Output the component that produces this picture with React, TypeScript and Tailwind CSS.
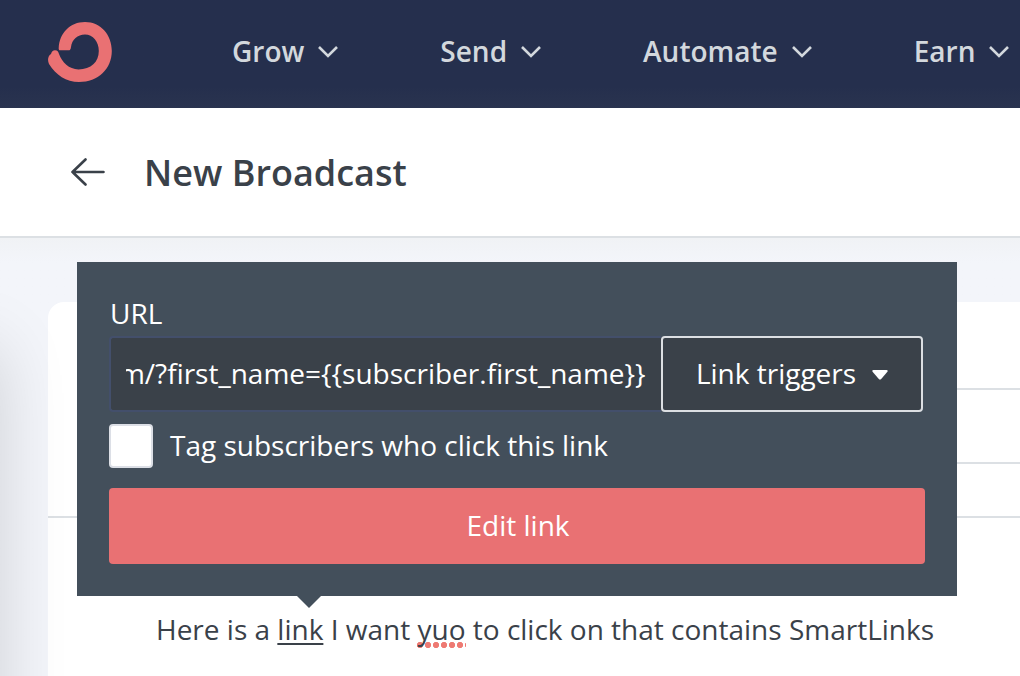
import { useLayoutEffect, useRef } from "react";

const navItems = ["Grow", "Send", "Automate", "Earn"];

function Logo() {
  return (
    <svg viewBox="48 22 64 60" className="h-[60px] w-16" fill="#e97173" aria-hidden="true">
      <path d="M60.3 50.3C59 50.3 58.6 49.5 58.7 48C59.5 33 70 22 85 22C101 22 111.8 35 111.8 51C111.8 69 98 82 79 82C66 82 56 75 49 64C47.3 60.5 47.8 56 51 54C51.5 52 53 50.3 55 50.3C57.5 50.3 58.4 52 59 54C62 62 69 69.4 78.5 69.4C91 69.4 98.8 62 98.8 51C98.8 42 93 34.6 85 34.6C77.5 34.6 72 39.5 71 47C70.8 49.5 70 50.3 68.5 50.3Z" />
    </svg>
  );
}

function Chevron() {
  return (
    <svg viewBox="0 0 20 12" className="mt-0.5 h-3 w-5" fill="none" stroke="currentColor" strokeWidth="2.6" aria-hidden="true">
      <path d="M1 1L10 10L19 1" />
    </svg>
  );
}

function LinkPopup() {
  const urlRef = useRef<HTMLInputElement>(null);

  // Keep the end of a long URL in view.
  useLayoutEffect(() => {
    const el = urlRef.current;
    if (el) el.scrollLeft = el.scrollWidth;
  }, []);

  return (
    <form className="absolute bottom-[calc(100%+13px)] left-[-79px] z-10 w-[880px] bg-[#434f5b] px-8 pt-[31px] pb-8 text-[28px] leading-10 text-white">
      <label htmlFor="url" className="block pl-px">
        URL
      </label>
      <div className="mt-[3px] flex pr-0.5">
        <input
          id="url"
          ref={urlRef}
          type="text"
          defaultValue="https://example.com/?first_name={{subscriber.first_name}}"
          className="h-[76px] min-w-0 flex-1 rounded-l border-2 border-r-0 border-[#434f6b] bg-[#3a4149] px-[15px] pb-0.5 outline-none"
        />
        <button
          type="button"
          className="flex h-[76px] w-[262px] items-center justify-center gap-4 rounded border-2 border-[#dcdfe3] bg-[#3a4149] pb-0.5"
        >
          Link triggers
          <svg viewBox="0 0 16 10" className="mt-1 h-2.5 w-4" fill="currentColor" aria-hidden="true">
            <path d="M1.5 0H14.5Q16.5 .3 15.2 2L9.2 9Q8 10.200 6.800 9L.8 2Q-.5 .3 1.500 0Z" />
          </svg>
        </button>
      </div>
      <div className="mt-3 flex items-center gap-[17px]">
        <input
          id="tag"
          type="checkbox"
          className="size-11 shrink-0 appearance-none rounded border-2 border-[#dcdfe6] bg-white"
        />
        <label htmlFor="tag" className="pb-0.5">
          Tag subscribers who click this link
        </label>
      </div>
      <button type="submit" className="mt-5 h-[76px] w-full rounded bg-[#e97173] pb-0.5 pl-0.5">
        Edit link
      </button>
      <svg viewBox="0 0 24 12" className="absolute top-full left-[220px] h-3 w-6" fill="#434f5b" aria-hidden="true">
        <path d="M0 0H24L12 12Z" />
      </svg>
    </form>
  );
}

export default function App() {
  return (
    <div className="flex h-screen flex-col overflow-hidden bg-[#f3f5fa] font-['Open_Sans','Noto_Sans',sans-serif] text-[#3a4149]">
      <header className="flex h-[108px] shrink-0 items-center bg-linear-to-b from-[#252f4d] from-80% to-[#29334f] pb-1 pl-12">
        <a href="#" aria-label="Home" className="shrink-0">
          <Logo />
        </a>
        <nav className="ml-[120px] flex gap-[102px] pb-0.5 text-[28px] leading-10 font-semibold text-[#d3d8dd]">
          {navItems.map((item) => (
            <button key={item} type="button" className="flex items-center gap-3.5">
              {item}
              <Chevron />
            </button>
          ))}
        </nav>
      </header>

      <div className="flex h-[130px] shrink-0 items-center gap-[39px] border-b-2 border-[#dce0e4] bg-white pl-[71px]">
        <a href="#" aria-label="Back">
          <svg
            viewBox="0 0 34 28"
            className="h-7 w-[34px]"
            fill="none"
            stroke="currentColor"
            strokeWidth="2.6"
            strokeLinecap="round"
            strokeLinejoin="round"
            aria-hidden="true"
          >
            <path d="M14.500 1.500L1.500 14L14.500 26.500M1.500 14H32.500" />
          </svg>
        </a>
        <h1 className="pt-0.5 text-[36px] leading-12 font-semibold">New Broadcast</h1>
      </div>

      <main className="relative flex flex-1 flex-col bg-linear-to-b from-[#f0f2f5] to-[#f3f5fa] to-[24px] pt-16 pl-12">
        <section className="flex-1 rounded-tl-2xl bg-white">
          <div className="border-b-2 border-[#dce0e4] pl-[108px]">
            <div className="h-[88px] border-b-2 border-[#dce0e4]" />
            <div className="h-[74px] border-b-2 border-[#dce0e4]" />
            <div className="h-[52px]" />
          </div>
          <div className="ml-[108px] pt-[91px] text-[28px] leading-10">
            <div className="relative">
              <p className="whitespace-nowrap">
                Here is a{" "}
                <a href="#" className="underline decoration-2 underline-offset-[3px]">
                  link
                </a>{" "}
                I want{" "}
                <span className="bg-[radial-gradient(circle_at_3px_3px,#ee7a73_2.8px,transparent_3.4px)] bg-[length:8px_6px] bg-[position:left_bottom] bg-repeat-x">
                  yuo
                </span>{" "}
                to click on that contains SmartLinks
              </p>
              <LinkPopup />
            </div>
          </div>
        </section>
        <div className="pointer-events-none absolute top-[110px] right-full h-screen w-20 shadow-[0_0_68px_rgba(0,0,0,0.15)]" />
      </main>
    </div>
  );
}
